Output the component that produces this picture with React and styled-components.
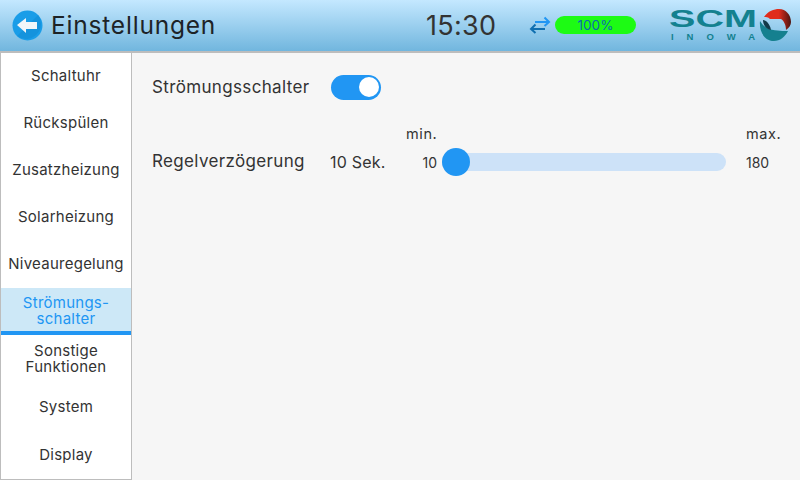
import styled, { createGlobalStyle } from "styled-components";

const Global = createGlobalStyle`
  html, body { margin: 0; padding: 0; }
  body { font-family: "Inter", "DejaVu Sans", sans-serif; color: #333; }
  * { box-sizing: border-box; }
`;

const menu = [
  "Schaltuhr",
  "Rückspülen",
  "Zusatzheizung",
  "Solarheizung",
  "Niveauregelung",
  "Strömungs-\nschalter",
  "Sonstige\nFunktionen",
  "System",
  "Display",
];

const Screen = styled.div`
  width: 800px;
  height: 480px;
  display: flex;
  flex-direction: column;
  overflow: hidden;
  background: #f6f6f6;
`;

const Header = styled.header`
  height: 53px;
  flex: none;
  display: flex;
  align-items: center;
  padding: 0 6px 1px 12px;
  border-bottom: 2px solid #bdbdbd;
  background: linear-gradient(#c4e8ff, #71b6de);
`;

const Title = styled.h1`
  margin: 0 0 0 8px;
  width: 375px;
  font-size: 24.5px;
  font-weight: 400;
  letter-spacing: 0.8px;
  color: #1d2327;
`;

const Clock = styled.div`
  width: 103px;
  font-size: 27px;
  letter-spacing: 0.3px;
  color: #333;
`;

const Battery = styled.div`
  width: 81px;
  height: 18px;
  margin-left: 4px;
  border-radius: 9px;
  background: #1dfb14;
  color: #0b6bb0;
  font-size: 13.5px;
  line-height: 18px;
  text-align: center;
`;

const Logo = styled.svg`
  margin-left: 33px;
  flex: none;
`;

const Body = styled.div`
  flex: 1;
  display: flex;
  min-height: 0;
`;

const Sidebar = styled.nav`
  width: 132px;
  flex: none;
  display: flex;
  flex-direction: column;
  background: #fff;
  border-left: 1px solid #bdbdbd;
  border-right: 1px solid #bdbdbd;
  border-bottom: 1px solid #bdbdbd;
`;

const MenuItem = styled.div`
  height: 47px;
  flex: ${(p) => (p.$stretch ? 1 : "none")};
  display: flex;
  align-items: center;
  justify-content: center;
  text-align: center;
  white-space: pre-line;
  font-size: 15px;
  letter-spacing: 0.25px;
  line-height: 16px;
  padding-bottom: ${(p) => (p.$stretch ? 0 : 1)}px;
  color: ${(p) => (p.$active ? "#2196f3" : "#333")};
  background: ${(p) => (p.$active ? "#cde8f7" : "transparent")};
  box-shadow: ${(p) => (p.$active ? "inset 0 -4px 0 #2196f3" : "none")};
`;

const Content = styled.main`
  flex: 1;
  padding: 19px 20px 0;
  display: flex;
  flex-direction: column;
`;

const Row = styled.div`
  display: flex;
  align-items: center;
`;

const Label = styled.div`
  font-size: 17px;
  line-height: 30px;
  letter-spacing: 0.35px;
  color: #333;
  width: ${(p) => p.$w}px;
`;

const Switch = styled.div`
  width: 50px;
  height: 25px;
  border-radius: 13px;
  background: #2196f3;
  display: flex;
  align-items: center;
  justify-content: flex-end;
  padding-right: 2px;
`;

const Knob = styled.div`
  width: 20px;
  height: 20px;
  border-radius: 50%;
  background: #fff;
`;

const SliderRow = styled(Row)`
  margin-top: 20px;
  align-items: flex-end;
`;

const Value = styled.div`
  width: 76px;
  font-size: 16px;
  line-height: 28px;
  letter-spacing: 0.2px;
`;

const SliderBox = styled.div`
  flex: 1;
  display: grid;
  grid-template-columns: 36px 1fr 34px;
  grid-template-rows: 26px 28px;
  align-items: center;
`;

const Min = styled.div`
  font-size: 14.5px;
  letter-spacing: 0.6px;
  margin-bottom: 4px;
`;

const Max = styled(Min)`
  grid-column: 3;
  justify-self: start;
`;

const Small = styled.div`
  font-size: 14px;
  justify-self: ${(p) => (p.$end ? "end" : "start")};
  margin-right: ${(p) => (p.$end ? 5 : 0)}px;
`;

const Track = styled.div`
  grid-column: 2;
  grid-row: 2;
  height: 18px;
  margin-right: 20px;
  border-radius: 9px;
  background: #cde2f8;
  display: flex;
  align-items: center;
`;

const Thumb = styled.div`
  width: 28px;
  height: 28px;
  border-radius: 50%;
  background: #2196f3;
`;

export default function App() {
  return (
    <Screen>
      <Global />
      <Header>
        <svg width="31" height="31" viewBox="0 0 31 31">
          <circle cx="15.5" cy="15.5" r="15" fill="#1a9de8" />
          <path d="M26 5A15 15 0 0 1 5 26Z" fill="#1593dd" />
          <path d="M5 15 14 8V12H25V19H14V23Z" fill="#f2f6f9" />
        </svg>
        <Title>Einstellungen</Title>
        <Clock>15:30</Clock>
        <svg width="22" height="18" viewBox="0 0 22 18" fill="none" strokeWidth="2">
          <path d="M6 6H20M15.5 1.5 20 6 15.5 10" stroke="#2196f3" />
          <path d="M16 13H2M6.5 8.5 2 13 6.5 17" stroke="#0f6fb0" />
        </svg>
        <Battery>100%</Battery>
        <Logo width="125" height="40" viewBox="0 0 125 40">
          <defs>
            <linearGradient id="tip" x1="0" x2="1" y1="0" y2="0">
              <stop offset="0.55" stopColor="#e02c1c" />
              <stop offset="1" stopColor="#4a1410" />
            </linearGradient>
          </defs>
          <text x="0" y="21.5" fontFamily="Liberation Sans" fontWeight="700" fontSize="23.5" textLength="88" lengthAdjust="spacingAndGlyphs" fill="#13818f">SCM</text>
          <text x="2" y="35" fontFamily="Liberation Sans" fontWeight="700" fontSize="9.5" textLength="84" fill="#13818f">INOWA</text>
          <path d="M95 12C99 6 105 4 110 4 117 4 122 10 122 17 122 20 120 23 117 25 117 20 115 16 112 14L101 14C99 12 97 12 95 12Z" fill="url(#tip)" />
          <path d="M91 16C90 26 95 36 105 36 111 36 116 32 119 26 115 26 108 26 100 24 95 22 93 19 91 16Z" fill="#15808f" />
          <path d="M94 15C97 15 101 19 102 25 97 24 94 20 94 15Z" fill="#123a48" />
        </Logo>
      </Header>
      <Body>
        <Sidebar>
          {menu.map((m, i) => (
            <MenuItem key={m} $active={i === 5} $stretch={i > 5}>{m}</MenuItem>
          ))}
        </Sidebar>
        <Content>
          <Row>
            <Label $w={179}>Strömungsschalter</Label>
            <Switch><Knob /></Switch>
          </Row>
          <SliderRow>
            <Label $w={178}>Regelverzögerung</Label>
            <Value>10 Sek.</Value>
            <SliderBox>
              <Min>min.</Min>
              <span />
              <Max>max.</Max>
              <Small $end>10</Small>
              <Track><Thumb /></Track>
              <Small>180</Small>
            </SliderBox>
          </SliderRow>
        </Content>
      </Body>
    </Screen>
  );
}
